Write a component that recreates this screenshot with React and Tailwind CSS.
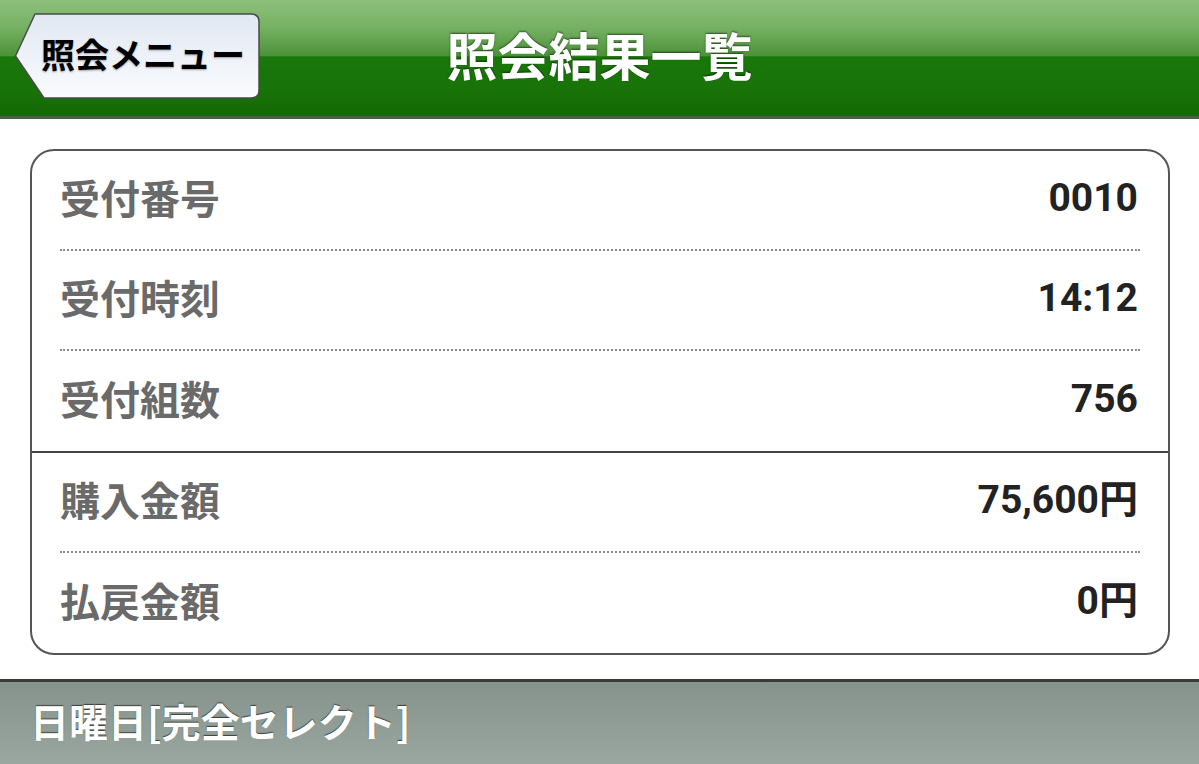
const rows1 = [
  { label: '受付番号', value: '0010' },
  { label: '受付時刻', value: '14:12' },
  { label: '受付組数', value: '756' },
];
const rows2 = [
  { label: '購入金額', value: '75,600円' },
  { label: '払戻金額', value: '0円' },
];

const jp = { fontFamily: '"Noto Sans CJK JP", "Noto Sans", sans-serif' };
const num = { fontFamily: 'Roboto, "Noto Sans CJK JP", sans-serif' };

function Row({ label, value, last }) {
  return (
    <div
      className={
        'mx-[28px] h-[100px] flex items-center justify-between ' +
        (last ? '' : 'border-b-2 border-dotted border-[#8a8a8a]')
      }
    >
      <span className="text-[40px] font-bold text-[#6a6a6a] leading-none pb-[6px]" style={jp}>
        {label}
      </span>
      <span className="text-[39px] font-bold text-[#222] leading-none pr-[2px] pb-[3px]" style={num}>
        {value}
      </span>
    </div>
  );
}

function BackButton() {
  return (
    <div className="relative w-[246px] h-[86px] flex items-center">
      <svg className="absolute inset-0" width="246" height="86" viewBox="0 0 246 86">
        <defs>
          <linearGradient id="bb" x1="0" y1="0" x2="0" y2="1">
            <stop offset="0" stopColor="#e1e8f3" />
            <stop offset="1" stopColor="#fafbfd" />
          </linearGradient>
        </defs>
        <path
          d="M21 1 L237 1 Q245 1 245 9 L245 77 Q245 85 237 85 L30 85 L1.5 43 Z"
          fill="url(#bb)"
          stroke="#4a4a4a"
          strokeWidth="1.5"
          strokeLinejoin="round"
        />
      </svg>
      <span
        className="relative pl-[27px] pb-[4px] text-[34px] font-bold text-black leading-none [text-shadow:0_1px_2px_rgba(0,0,0,0.35)]"
        style={jp}
      >
        照会メニュー
      </span>
    </div>
  );
}

export default function App() {
  return (
    <div className="w-[1199px] h-[764px] bg-white overflow-hidden flex flex-col">
      <header className="h-[119px] flex flex-col border-b-[3px] border-[#4d5c4a]">
        <div className="relative flex-1 grid grid-cols-[1fr_auto_1fr] items-center bg-[linear-gradient(to_bottom,#8dc07b_0%,#74b062_25%,#4b9238_48%,#1a780a_49%,#187208_80%,#156805_100%)]">
          <div className="pl-[14px] pb-[4px]">
            <BackButton />
          </div>
          <h1
            className="text-[51px] font-bold text-white leading-none pb-[8px] [text-shadow:0_-1px_2px_rgba(0,0,0,0.55)]"
            style={jp}
          >
            照会結果一覧
          </h1>
          <div />
        </div>
      </header>

      <div className="px-[30px] pt-[30px]">
        <div className="w-[1140px] border-2 border-[#555] rounded-[24px] bg-white">
          <div className="border-b-2 border-[#444]">
            {rows1.map((r, i) => (
              <Row key={i} label={r.label} value={r.value} last={i === rows1.length - 1} />
            ))}
          </div>
          {rows2.map((r, i) => (
            <Row key={i} label={r.label} value={r.value} last={i === rows2.length - 1} />
          ))}
        </div>
      </div>

      <div className="mt-[24px] flex-1 border-t-[3px] border-[#3a3a3a] bg-[linear-gradient(to_bottom,#86928c,#9aa7a1)] flex items-center pl-[30px] pb-[6px]">
        <span
          className="text-[39px] font-bold text-white leading-none [text-shadow:0_-1px_1px_rgba(0,0,0,0.6)]"
          style={jp}
        >
          日曜日[完全セレクト]
        </span>
      </div>
    </div>
  );
}
